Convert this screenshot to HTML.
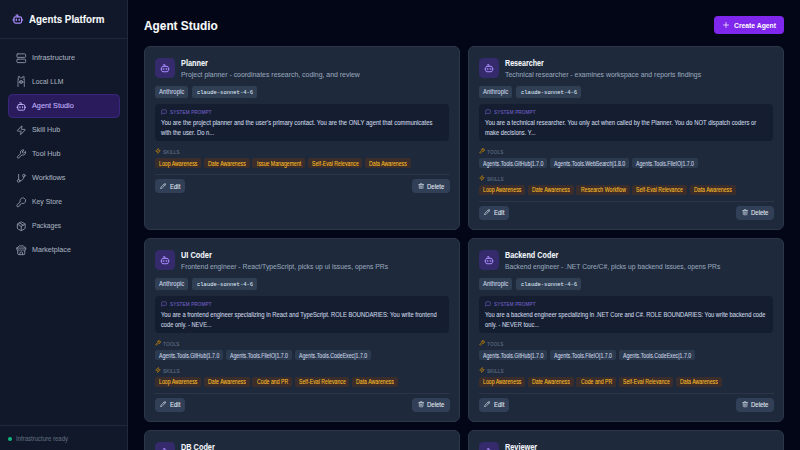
<!DOCTYPE html>
<html><head><meta charset="utf-8">
<style>
*{box-sizing:border-box;margin:0;padding:0}
html,body{width:800px;height:450px;overflow:hidden;background:#020617;font-family:"Liberation Sans",sans-serif}
svg{display:block}
.s{position:relative;display:block;white-space:nowrap}
.s>i{visibility:hidden;font-style:normal}
.s>b{position:absolute;left:0;top:0;font-weight:inherit;transform-origin:0 0;-webkit-text-stroke:0.08px currentColor}
.a{position:absolute;white-space:nowrap;transform-origin:0 0;-webkit-text-stroke:0.08px currentColor}
.sb{position:absolute;left:0;top:0;width:128px;height:450px;background:#101829;border-right:1px solid #1e293b}
.sbh{position:absolute;left:0;top:0;width:127px;height:39px;border-bottom:1px solid #1e293b}
.sbh svg{position:absolute;left:12.2px;top:12.8px}
.nav{position:absolute;left:8px;top:46px;width:112px}
.ni{position:relative;height:24px;border-radius:4px;color:#a3adbd}
.ni svg{position:absolute;left:8px;top:7px}
.ni.act{background:#2a1b5d;border:1px solid #38277c;border-radius:4.5px;color:#c4b5fd}
.ni.act svg{left:7px;top:6px}
.ni.act .a{margin-left:-1px;margin-top:-1px}
.sbf{position:absolute;left:0;top:425px;width:127px;height:25px;border-top:1px solid #1e293b}
.dot{position:absolute;left:8px;top:10.5px;width:4px;height:4px;border-radius:50%;background:#10b981}
.cbtn{position:absolute;left:714px;top:16px;width:70px;height:18px;border-radius:4px;background:#7f27ec;color:#fff;font-weight:700}
.cbtn svg{position:absolute;left:9px;top:6px}
.card{position:absolute;width:316px;height:184px;background:#1e293b;border:0.5px solid #2b3749;border-radius:6px;padding:11px 9.5px 10px 9.5px;display:flex;flex-direction:column}
.card>*{flex:none}
.hd{display:flex;height:21.5px}
.ib{width:20px;height:20px;border-radius:4.5px;background:#352a6b;flex:none;position:relative}
.ib svg{position:absolute;left:5px;top:4.8px}
.tt{margin-left:6px}
.t1{font-weight:700;color:#f1f5f9;line-height:10px;height:10px}
.t2{color:#94a3b8;line-height:10px;margin-top:1.8px;height:10px}
.bd{display:flex;margin-top:6.5px;height:11.75px}
.bg{background:#313f55;border-radius:2.5px;padding:0 4.3px;color:#cbd5e1;line-height:11.75px;margin-right:4px;white-space:nowrap}
.bg.m{font-family:"Liberation Mono",monospace}
.nm>b{-webkit-text-stroke:0.05px currentColor;color:#dbe3ee}
.pr{margin-bottom:1.2px;margin-top:6.5px;margin-right:0.8px;background:#151e31;border-radius:4px;padding:4px 6px 3.1px 6px}
.pl{display:flex;align-items:center;height:7px;color:#7360c8;letter-spacing:0.16px}
.pl svg{margin-right:3px}
.pt{margin-top:2.7px;color:#cbd5e1;line-height:9.8px;white-space:nowrap}
.pt div{height:9.8px}
.sl{display:flex;align-items:center;height:7px;margin-top:6.1px;color:#64748b;letter-spacing:0.2px}
.sl svg{margin-right:2.6px}
.ch{display:flex;flex-wrap:nowrap;margin-top:3.2px;height:10.4px}
.c{border-radius:2px;padding:0 4.1px;line-height:10.4px;margin-right:2.8px;white-space:nowrap}
.c.t{background:#2c3a50;color:#cbd5e1}
.c.s{background:#3a2d2b;color:#fbbf24}
.ft{margin-top:6px;border-top:0.5px solid #2a3648;padding-top:3.4px;display:flex;justify-content:space-between}
.btn{height:14px;border-radius:4px;background:#324057;color:#e2e8f0;line-height:14px;position:relative;white-space:nowrap}
.btn svg{position:absolute;top:3.8px}
.btn.e{width:30.6px}
.btn.e svg{left:5.7px}
.btn.d{width:37.5px}
.btn.d svg{left:6px}
</style></head><body>
<div class="sb">
<div class="sbh"><svg width="11.5" height="11.5" viewBox="0 0 24 24" fill="none" stroke="#a78bfa" stroke-width="2.6" stroke-linecap="round" stroke-linejoin="round"><path d="M12 8V4.2H8.5"/><rect width="16" height="13" x="4" y="8" rx="3.2"/><path d="M2 14.5h2"/><path d="M20 14.5h2"/><path d="M15 12.8v2.8"/><path d="M9 12.8v2.8"/></svg><span class="a" style="font-size:10.000px;transform:scaleX(0.9780);left:28.5px;top:14.2px;line-height:12px;font-weight:700;color:#f8fafc">Agents Platform</span></div>
<div class="nav"><div class="ni"><svg width="10.5" height="10.5" viewBox="0 0 24 24" fill="none" stroke="#8b95a7" stroke-width="2.1" stroke-linecap="round" stroke-linejoin="round"><rect width="20" height="8" x="2" y="2" rx="2" ry="2"/><rect width="20" height="8" x="2" y="14" rx="2" ry="2"/></svg><span class="a" style="font-size:7.300px;transform:scaleX(1.0000);left:24px;top:8.4px;line-height:8px">Infrastructure</span></div><div class="ni"><svg style="left:7px;top:5px" width="12" height="12" viewBox="0 0 12 12" fill="none" stroke="#8b95a7" stroke-width="0.85" stroke-linecap="round" stroke-linejoin="round"><path d="M3.2 4.6L3.3 1.6Q3.6 0.9 4.3 1.3L5.2 3Q6.15 2.6 7.1 3L8 1.3Q8.7 0.9 9 1.6L9.1 4.6"/><path d="M3.2 4.6Q2.6 5.6 3 7L3 11.6"/><path d="M9.1 4.6Q9.7 5.6 9.3 7L9.3 11.6"/><ellipse cx="6.15" cy="7" rx="1.8" ry="1.4" fill="#8b95a7" fill-opacity="0.55"/></svg><span class="a" style="font-size:7.300px;transform:scaleX(0.9320);left:24px;top:8.4px;line-height:8px">Local LLM</span></div><div class="ni act"><svg width="10.5" height="10.5" viewBox="0 0 24 24" fill="none" stroke="#c4b5fd" stroke-width="2.1" stroke-linecap="round" stroke-linejoin="round"><path d="M12 8V4.2H8.5"/><rect width="16" height="13" x="4" y="8" rx="3.2"/><path d="M2 14.5h2"/><path d="M20 14.5h2"/><path d="M15 12.8v2.8"/><path d="M9 12.8v2.8"/></svg><span class="a" style="font-size:7.300px;transform:scaleX(1.0000);left:24px;top:8.4px;line-height:8px">Agent Studio</span></div><div class="ni"><svg width="10.5" height="10.5" viewBox="0 0 24 24" fill="none" stroke="#8b95a7" stroke-width="2.1" stroke-linecap="round" stroke-linejoin="round"><path d="M4 14a1 1 0 0 1-.78-1.630l9.9-10.2a.5.5 0 0 1 .86.46l-1.92 6.02A1 1 0 0 0 13 10h7a1 1 0 0 1 .78 1.63l-9.9 10.2a.5.5 0 0 1-.86-.46l1.92-6.02A1 1 0 0 0 11 14z"/></svg><span class="a" style="font-size:7.300px;transform:scaleX(0.9760);left:24px;top:8.4px;line-height:8px">Skill Hub</span></div><div class="ni"><svg width="10.5" height="10.5" viewBox="0 0 24 24" fill="none" stroke="#8b95a7" stroke-width="2.1" stroke-linecap="round" stroke-linejoin="round"><path d="M14.7 6.3a1 1 0 0 0 0 1.4l1.6 1.6a1 1 0 0 0 1.4 0l3.77-3.77a6 6 0 0 1-7.94 7.94l-6.91 6.91a2.12 2.12 0 0 1-3-3l6.91-6.91a6 6 0 0 1 7.94-7.94l-3.76 3.76z"/></svg><span class="a" style="font-size:7.300px;transform:scaleX(0.9900);left:24px;top:8.4px;line-height:8px">Tool Hub</span></div><div class="ni"><svg width="10.5" height="10.5" viewBox="0 0 24 24" fill="none" stroke="#8b95a7" stroke-width="2.1" stroke-linecap="round" stroke-linejoin="round"><line x1="6" x2="6" y1="3" y2="15"/><circle cx="18" cy="6" r="3"/><circle cx="6" cy="18" r="3"/><path d="M18 9a9 9 0 0 1-9 9"/></svg><span class="a" style="font-size:7.300px;transform:scaleX(1.0000);left:24px;top:8.4px;line-height:8px">Workflows</span></div><div class="ni"><svg width="10.5" height="10.5" viewBox="0 0 24 24" fill="none" stroke="#8b95a7" stroke-width="2.1" stroke-linecap="round" stroke-linejoin="round"><path d="M2.586 17.414A2 2 0 0 0 2 18.828V21a1 1 0 0 0 1 1h3a1 1 0 0 0 1-1v-1a1 1 0 0 1 1-1h1a1 1 0 0 0 1-1v-1a1 1 0 0 1 1-1h.172a2 2 0 0 0 1.414-.586l.814-.814a6.5 6.5 0 1 0-4-4z"/></svg><span class="a" style="font-size:7.300px;transform:scaleX(0.9375);left:24px;top:8.4px;line-height:8px">Key Store</span></div><div class="ni"><svg width="10.5" height="10.5" viewBox="0 0 24 24" fill="none" stroke="#8b95a7" stroke-width="2.1" stroke-linecap="round" stroke-linejoin="round"><path d="M11 21.73a2 2 0 0 0 2 0l7-4A2 2 0 0 0 21 16V8a2 2 0 0 0-1-1.73l-7-4a2 2 0 0 0-2 0l-7 4A2 2 0 0 0 3 8v8a2 2 0 0 0 1 1.73z"/><path d="M12 22V12"/><path d="m3.3 7 7.703 4.734a2 2 0 0 0 1.994 0L20.7 7"/><path d="m7.5 4.27 9 5.15"/></svg><span class="a" style="font-size:7.300px;transform:scaleX(0.9100);left:24px;top:8.4px;line-height:8px">Packages</span></div><div class="ni"><svg width="10.5" height="10.5" viewBox="0 0 24 24" fill="none" stroke="#8b95a7" stroke-width="2.1" stroke-linecap="round" stroke-linejoin="round"><path d="m2 7 4.41-4.41A2 2 0 0 1 7.83 2h8.34a2 2 0 0 1 1.42.59L22 7"/><path d="M4 12v8a2 2 0 0 0 2 2h12a2 2 0 0 0 2-2v-8"/><path d="M15 22v-4a2 2 0 0 0-2-2h-2a2 2 0 0 0-2 2v4"/><path d="M2 7h20"/><path d="M22 7v3a2 2 0 0 1-2 2a2.7 2.7 0 0 1-1.59-.63.7.7 0 0 0-.82 0A2.7 2.7 0 0 1 16 12a2.7 2.7 0 0 1-1.59-.63.7.7 0 0 0-.82 0A2.7 2.7 0 0 1 12 12a2.7 2.7 0 0 1-1.59-.63.7.7 0 0 0-.82 0A2.7 2.7 0 0 1 8 12a2.7 2.7 0 0 1-1.59-.63.7.7 0 0 0-.82 0A2.7 2.7 0 0 1 4 12a2 2 0 0 1-2-2V7"/></svg><span class="a" style="font-size:7.300px;transform:scaleX(0.9780);left:24px;top:8.4px;line-height:8px">Marketplace</span></div></div>
<div class="sbf"><div class="dot"></div><span class="a" style="font-size:6.300px;transform:scaleX(0.9524);left:16px;top:8.5px;line-height:8px;color:#5f6b7e">Infrastructure ready</span></div>
</div>
<span class="a" style="font-size:12.000px;transform:scaleX(0.9870);left:144px;top:18px;line-height:16px;font-weight:700;color:#f8fafc">Agent Studio</span>
<div class="cbtn"><svg width="6" height="6" viewBox="0 0 12 12" fill="none" stroke="#fff" stroke-width="1.4" stroke-linecap="round" stroke-linejoin="round"><path d="M6 1v10M1 6h10"/></svg><span class="a" style="font-size:7.616px;transform:scaleX(0.8929);left:19.9px;top:5.6px;line-height:8px;-webkit-text-stroke:0">Create Agent</span></div>
<div class="card" style="left:144px;top:46px"><div class="hd"><div class="ib"><svg width="10" height="10" viewBox="0 0 24 24" fill="none" stroke="#a78bfa" stroke-width="2.4" stroke-linecap="round" stroke-linejoin="round"><path d="M12 8V4.2H8.5"/><rect width="16" height="13" x="4" y="8" rx="3.2"/><path d="M2 14.5h2"/><path d="M20 14.5h2"/><path d="M15 12.8v2.8"/><path d="M9 12.8v2.8"/></svg></div><div class="tt"><div class="t1"><span class="s " style="font-size:7.5px"><i>Planner</i><b style="font-size:8.400px;transform:scaleX(0.8768)">Planner</b></span></div><div class="t2"><span class="s " style="font-size:7px"><i>Project planner - coordinates research, coding, and review</i><b style="font-size:7.840px;transform:scaleX(0.8835)">Project planner - coordinates research, coding, and review</b></span></div></div></div><div class="bd"><div class="bg"><span class="s " style="font-size:6px"><i>Anthropic</i><b style="top:0.4px;font-size:6.720px;transform:scaleX(0.8929)">Anthropic</b></span></div><div class="bg m"><span class="s nm" style="font-size:5.5px"><i>claude-sonnet-4-6</i><b style="top:0.5px;font-size:6.160px;transform:scaleX(0.8929)">claude-sonnet-4-6</b></span></div></div><div class="pr"><div class="pl"><svg width="6.2" height="6.2" viewBox="0 0 24 24" fill="none" stroke="#7360c8" stroke-width="2.3" stroke-linecap="round" stroke-linejoin="round"><path d="M21 15a2 2 0 0 1-2 2H7l-4 4V5a2 2 0 0 1 2-2h14a2 2 0 0 1 2 2z"/></svg><span class="s " style="font-size:4.6px"><i>SYSTEM PROMPT</i><b style="font-size:5.152px;transform:scaleX(0.8929)">SYSTEM PROMPT</b></span></div><div class="pt"><div><span class="s " style="font-size:6px"><i>You are the project planner and the user&#39;s primary contact. You are the ONLY agent that communicates</i><b style="font-size:6.720px;transform:scaleX(0.8866)">You are the project planner and the user&#39;s primary contact. You are the ONLY agent that communicates</b></span></div><div><span class="s " style="font-size:6px"><i>with the user. Do n...</i><b style="font-size:6.720px;transform:scaleX(0.8670)">with the user. Do n...</b></span></div></div></div><div class="sl"><svg width="6" height="6" viewBox="0 0 24 24" fill="none" stroke="#ca8a04" stroke-width="2.6" stroke-linecap="round" stroke-linejoin="round"><path d="M4 14a1 1 0 0 1-.78-1.630l9.9-10.2a.5.5 0 0 1 .86.46l-1.92 6.02A1 1 0 0 0 13 10h7a1 1 0 0 1 .78 1.63l-9.9 10.2a.5.5 0 0 1-.86-.46l1.92-6.02A1 1 0 0 0 11 14z"/></svg><span class="s " style="font-size:4.6px"><i>SKILLS</i><b style="font-size:5.152px;transform:scaleX(0.8929)">SKILLS</b></span></div><div class="ch"><div class="c s"><span class="s " style="font-size:5.2px"><i>Loop Awareness</i><b style="top:0.5px;font-size:6.500px;transform:scaleX(0.8000)">Loop Awareness</b></span></div><div class="c s"><span class="s " style="font-size:5.2px"><i>Date Awareness</i><b style="top:0.5px;font-size:6.500px;transform:scaleX(0.8000)">Date Awareness</b></span></div><div class="c s"><span class="s " style="font-size:5.2px"><i>Issue Management</i><b style="top:0.5px;font-size:6.500px;transform:scaleX(0.8000)">Issue Management</b></span></div><div class="c s"><span class="s " style="font-size:5.2px"><i>Self-Eval Relevance</i><b style="top:0.5px;font-size:6.500px;transform:scaleX(0.8000)">Self-Eval Relevance</b></span></div><div class="c s"><span class="s " style="font-size:5.2px"><i>Data Awareness</i><b style="top:0.5px;font-size:6.500px;transform:scaleX(0.8000)">Data Awareness</b></span></div></div><div class="ft"><div class="btn e"><svg width="6.2" height="6.2" viewBox="0 0 24 24" fill="none" stroke="#cbd5e1" stroke-width="2.8" stroke-linecap="round" stroke-linejoin="round"><path d="M21.174 6.812a1 1 0 0 0-3.986-3.987L3.842 16.174a2 2 0 0 0-.5.83l-1.321 4.352a.5.5 0 0 0 .623.622l4.353-1.32a2 2 0 0 0 .83-.497z"/><path d="m15 5 4 4"/></svg><span class="a" style="font-size:6.720px;transform:scaleX(0.8929);left:15px;top:3.8px;line-height:8px">Edit</span></div><div class="btn d"><svg width="6.3" height="6.3" viewBox="0 0 24 24" fill="none" stroke="#cbd5e1" stroke-width="2.6" stroke-linecap="round" stroke-linejoin="round"><path d="M3 6h18"/><path d="M19 6v14c0 1-1 2-2 2H7c-1 0-2-1-2-2V6"/><path d="M8 6V4c0-1 1-2 2-2h4c1 0 2 1 2 2v2"/><line x1="10" x2="10" y1="11" y2="17"/><line x1="14" x2="14" y1="11" y2="17"/></svg><span class="a" style="font-size:6.720px;transform:scaleX(0.8929);left:15px;top:3.8px;line-height:8px">Delete</span></div></div></div>
<div class="card" style="left:468px;top:46px"><div class="hd"><div class="ib"><svg width="10" height="10" viewBox="0 0 24 24" fill="none" stroke="#a78bfa" stroke-width="2.4" stroke-linecap="round" stroke-linejoin="round"><path d="M12 8V4.2H8.5"/><rect width="16" height="13" x="4" y="8" rx="3.2"/><path d="M2 14.5h2"/><path d="M20 14.5h2"/><path d="M15 12.8v2.8"/><path d="M9 12.8v2.8"/></svg></div><div class="tt"><div class="t1"><span class="s " style="font-size:7.5px"><i>Researcher</i><b style="font-size:8.400px;transform:scaleX(0.8518)">Researcher</b></span></div><div class="t2"><span class="s " style="font-size:7px"><i>Technical researcher - examines workspace and reports findings</i><b style="font-size:7.840px;transform:scaleX(0.8786)">Technical researcher - examines workspace and reports findings</b></span></div></div></div><div class="bd"><div class="bg"><span class="s " style="font-size:6px"><i>Anthropic</i><b style="top:0.4px;font-size:6.720px;transform:scaleX(0.8929)">Anthropic</b></span></div><div class="bg m"><span class="s nm" style="font-size:5.5px"><i>claude-sonnet-4-6</i><b style="top:0.5px;font-size:6.160px;transform:scaleX(0.8929)">claude-sonnet-4-6</b></span></div></div><div class="pr"><div class="pl"><svg width="6.2" height="6.2" viewBox="0 0 24 24" fill="none" stroke="#7360c8" stroke-width="2.3" stroke-linecap="round" stroke-linejoin="round"><path d="M21 15a2 2 0 0 1-2 2H7l-4 4V5a2 2 0 0 1 2-2h14a2 2 0 0 1 2 2z"/></svg><span class="s " style="font-size:4.6px"><i>SYSTEM PROMPT</i><b style="font-size:5.152px;transform:scaleX(0.8929)">SYSTEM PROMPT</b></span></div><div class="pt"><div><span class="s " style="font-size:6px"><i>You are a technical researcher. You only act when called by the Planner. You do NOT dispatch coders or</i><b style="font-size:6.720px;transform:scaleX(0.8759)">You are a technical researcher. You only act when called by the Planner. You do NOT dispatch coders or</b></span></div><div><span class="s " style="font-size:6px"><i>make decisions. Y...</i><b style="font-size:6.720px;transform:scaleX(0.8571)">make decisions. Y...</b></span></div></div></div><div class="sl"><svg width="6" height="6" viewBox="0 0 24 24" fill="none" stroke="#ca8a04" stroke-width="2.6" stroke-linecap="round" stroke-linejoin="round"><path d="M14.7 6.3a1 1 0 0 0 0 1.4l1.6 1.6a1 1 0 0 0 1.4 0l3.77-3.77a6 6 0 0 1-7.94 7.94l-6.91 6.91a2.12 2.12 0 0 1-3-3l6.91-6.91a6 6 0 0 1 7.94-7.94l-3.76 3.76z"/></svg><span class="s " style="font-size:4.6px"><i>TOOLS</i><b style="font-size:5.152px;transform:scaleX(0.8929)">TOOLS</b></span></div><div class="ch"><div class="c t"><span class="s " style="font-size:5.2px"><i>Agents.Tools.GitHub|1.7.0</i><b style="top:0.5px;font-size:6.500px;transform:scaleX(0.8000)">Agents.Tools.GitHub|1.7.0</b></span></div><div class="c t"><span class="s " style="font-size:5.2px"><i>Agents.Tools.WebSearch|1.8.0</i><b style="top:0.5px;font-size:6.500px;transform:scaleX(0.8000)">Agents.Tools.WebSearch|1.8.0</b></span></div><div class="c t"><span class="s " style="font-size:5.2px"><i>Agents.Tools.FileIO|1.7.0</i><b style="top:0.5px;font-size:6.500px;transform:scaleX(0.8000)">Agents.Tools.FileIO|1.7.0</b></span></div></div><div class="sl"><svg width="6" height="6" viewBox="0 0 24 24" fill="none" stroke="#ca8a04" stroke-width="2.6" stroke-linecap="round" stroke-linejoin="round"><path d="M4 14a1 1 0 0 1-.78-1.630l9.9-10.2a.5.5 0 0 1 .86.46l-1.92 6.02A1 1 0 0 0 13 10h7a1 1 0 0 1 .78 1.63l-9.9 10.2a.5.5 0 0 1-.86-.46l1.92-6.02A1 1 0 0 0 11 14z"/></svg><span class="s " style="font-size:4.6px"><i>SKILLS</i><b style="font-size:5.152px;transform:scaleX(0.8929)">SKILLS</b></span></div><div class="ch"><div class="c s"><span class="s " style="font-size:5.2px"><i>Loop Awareness</i><b style="top:0.5px;font-size:6.500px;transform:scaleX(0.8000)">Loop Awareness</b></span></div><div class="c s"><span class="s " style="font-size:5.2px"><i>Date Awareness</i><b style="top:0.5px;font-size:6.500px;transform:scaleX(0.8000)">Date Awareness</b></span></div><div class="c s"><span class="s " style="font-size:5.2px"><i>Research Workflow</i><b style="top:0.5px;font-size:6.500px;transform:scaleX(0.8000)">Research Workflow</b></span></div><div class="c s"><span class="s " style="font-size:5.2px"><i>Self-Eval Relevance</i><b style="top:0.5px;font-size:6.500px;transform:scaleX(0.8000)">Self-Eval Relevance</b></span></div><div class="c s"><span class="s " style="font-size:5.2px"><i>Data Awareness</i><b style="top:0.5px;font-size:6.500px;transform:scaleX(0.8000)">Data Awareness</b></span></div></div><div class="ft"><div class="btn e"><svg width="6.2" height="6.2" viewBox="0 0 24 24" fill="none" stroke="#cbd5e1" stroke-width="2.8" stroke-linecap="round" stroke-linejoin="round"><path d="M21.174 6.812a1 1 0 0 0-3.986-3.987L3.842 16.174a2 2 0 0 0-.5.83l-1.321 4.352a.5.5 0 0 0 .623.622l4.353-1.32a2 2 0 0 0 .83-.497z"/><path d="m15 5 4 4"/></svg><span class="a" style="font-size:6.720px;transform:scaleX(0.8929);left:15px;top:3.8px;line-height:8px">Edit</span></div><div class="btn d"><svg width="6.3" height="6.3" viewBox="0 0 24 24" fill="none" stroke="#cbd5e1" stroke-width="2.6" stroke-linecap="round" stroke-linejoin="round"><path d="M3 6h18"/><path d="M19 6v14c0 1-1 2-2 2H7c-1 0-2-1-2-2V6"/><path d="M8 6V4c0-1 1-2 2-2h4c1 0 2 1 2 2v2"/><line x1="10" x2="10" y1="11" y2="17"/><line x1="14" x2="14" y1="11" y2="17"/></svg><span class="a" style="font-size:6.720px;transform:scaleX(0.8929);left:15px;top:3.8px;line-height:8px">Delete</span></div></div></div>
<div class="card" style="left:144px;top:238px"><div class="hd"><div class="ib"><svg width="10" height="10" viewBox="0 0 24 24" fill="none" stroke="#a78bfa" stroke-width="2.4" stroke-linecap="round" stroke-linejoin="round"><path d="M12 8V4.2H8.5"/><rect width="16" height="13" x="4" y="8" rx="3.2"/><path d="M2 14.5h2"/><path d="M20 14.5h2"/><path d="M15 12.8v2.8"/><path d="M9 12.8v2.8"/></svg></div><div class="tt"><div class="t1"><span class="s " style="font-size:7.5px"><i>UI Coder</i><b style="font-size:8.400px;transform:scaleX(0.8839)">UI Coder</b></span></div><div class="t2"><span class="s " style="font-size:7px"><i>Frontend engineer - React/TypeScript, picks up ui issues, opens PRs</i><b style="font-size:7.840px;transform:scaleX(0.8670)">Frontend engineer - React/TypeScript, picks up ui issues, opens PRs</b></span></div></div></div><div class="bd"><div class="bg"><span class="s " style="font-size:6px"><i>Anthropic</i><b style="top:0.4px;font-size:6.720px;transform:scaleX(0.8929)">Anthropic</b></span></div><div class="bg m"><span class="s nm" style="font-size:5.5px"><i>claude-sonnet-4-6</i><b style="top:0.5px;font-size:6.160px;transform:scaleX(0.8929)">claude-sonnet-4-6</b></span></div></div><div class="pr"><div class="pl"><svg width="6.2" height="6.2" viewBox="0 0 24 24" fill="none" stroke="#7360c8" stroke-width="2.3" stroke-linecap="round" stroke-linejoin="round"><path d="M21 15a2 2 0 0 1-2 2H7l-4 4V5a2 2 0 0 1 2-2h14a2 2 0 0 1 2 2z"/></svg><span class="s " style="font-size:4.6px"><i>SYSTEM PROMPT</i><b style="font-size:5.152px;transform:scaleX(0.8929)">SYSTEM PROMPT</b></span></div><div class="pt"><div><span class="s " style="font-size:6px"><i>You are a frontend engineer specializing in React and TypeScript. ROLE BOUNDARIES: You write frontend</i><b style="font-size:6.720px;transform:scaleX(0.8652)">You are a frontend engineer specializing in React and TypeScript. ROLE BOUNDARIES: You write frontend</b></span></div><div><span class="s " style="font-size:6px"><i>code only. - NEVE...</i><b style="font-size:6.720px;transform:scaleX(0.8446)">code only. - NEVE...</b></span></div></div></div><div class="sl"><svg width="6" height="6" viewBox="0 0 24 24" fill="none" stroke="#ca8a04" stroke-width="2.6" stroke-linecap="round" stroke-linejoin="round"><path d="M14.7 6.3a1 1 0 0 0 0 1.4l1.6 1.6a1 1 0 0 0 1.4 0l3.77-3.77a6 6 0 0 1-7.94 7.94l-6.91 6.91a2.12 2.12 0 0 1-3-3l6.91-6.91a6 6 0 0 1 7.94-7.94l-3.76 3.76z"/></svg><span class="s " style="font-size:4.6px"><i>TOOLS</i><b style="font-size:5.152px;transform:scaleX(0.8929)">TOOLS</b></span></div><div class="ch"><div class="c t"><span class="s " style="font-size:5.2px"><i>Agents.Tools.GitHub|1.7.0</i><b style="top:0.5px;font-size:6.500px;transform:scaleX(0.8000)">Agents.Tools.GitHub|1.7.0</b></span></div><div class="c t"><span class="s " style="font-size:5.2px"><i>Agents.Tools.FileIO|1.7.0</i><b style="top:0.5px;font-size:6.500px;transform:scaleX(0.8000)">Agents.Tools.FileIO|1.7.0</b></span></div><div class="c t"><span class="s " style="font-size:5.2px"><i>Agents.Tools.CodeExec|1.7.0</i><b style="top:0.5px;font-size:6.500px;transform:scaleX(0.8000)">Agents.Tools.CodeExec|1.7.0</b></span></div></div><div class="sl"><svg width="6" height="6" viewBox="0 0 24 24" fill="none" stroke="#ca8a04" stroke-width="2.6" stroke-linecap="round" stroke-linejoin="round"><path d="M4 14a1 1 0 0 1-.78-1.630l9.9-10.2a.5.5 0 0 1 .86.46l-1.92 6.02A1 1 0 0 0 13 10h7a1 1 0 0 1 .78 1.63l-9.9 10.2a.5.5 0 0 1-.86-.46l1.92-6.02A1 1 0 0 0 11 14z"/></svg><span class="s " style="font-size:4.6px"><i>SKILLS</i><b style="font-size:5.152px;transform:scaleX(0.8929)">SKILLS</b></span></div><div class="ch"><div class="c s"><span class="s " style="font-size:5.2px"><i>Loop Awareness</i><b style="top:0.5px;font-size:6.500px;transform:scaleX(0.8000)">Loop Awareness</b></span></div><div class="c s"><span class="s " style="font-size:5.2px"><i>Date Awareness</i><b style="top:0.5px;font-size:6.500px;transform:scaleX(0.8000)">Date Awareness</b></span></div><div class="c s"><span class="s " style="font-size:5.2px"><i>Code and PR</i><b style="top:0.5px;font-size:6.500px;transform:scaleX(0.8000)">Code and PR</b></span></div><div class="c s"><span class="s " style="font-size:5.2px"><i>Self-Eval Relevance</i><b style="top:0.5px;font-size:6.500px;transform:scaleX(0.8000)">Self-Eval Relevance</b></span></div><div class="c s"><span class="s " style="font-size:5.2px"><i>Data Awareness</i><b style="top:0.5px;font-size:6.500px;transform:scaleX(0.8000)">Data Awareness</b></span></div></div><div class="ft"><div class="btn e"><svg width="6.2" height="6.2" viewBox="0 0 24 24" fill="none" stroke="#cbd5e1" stroke-width="2.8" stroke-linecap="round" stroke-linejoin="round"><path d="M21.174 6.812a1 1 0 0 0-3.986-3.987L3.842 16.174a2 2 0 0 0-.5.83l-1.321 4.352a.5.5 0 0 0 .623.622l4.353-1.32a2 2 0 0 0 .83-.497z"/><path d="m15 5 4 4"/></svg><span class="a" style="font-size:6.720px;transform:scaleX(0.8929);left:15px;top:3.8px;line-height:8px">Edit</span></div><div class="btn d"><svg width="6.3" height="6.3" viewBox="0 0 24 24" fill="none" stroke="#cbd5e1" stroke-width="2.6" stroke-linecap="round" stroke-linejoin="round"><path d="M3 6h18"/><path d="M19 6v14c0 1-1 2-2 2H7c-1 0-2-1-2-2V6"/><path d="M8 6V4c0-1 1-2 2-2h4c1 0 2 1 2 2v2"/><line x1="10" x2="10" y1="11" y2="17"/><line x1="14" x2="14" y1="11" y2="17"/></svg><span class="a" style="font-size:6.720px;transform:scaleX(0.8929);left:15px;top:3.8px;line-height:8px">Delete</span></div></div></div>
<div class="card" style="left:468px;top:238px"><div class="hd"><div class="ib"><svg width="10" height="10" viewBox="0 0 24 24" fill="none" stroke="#a78bfa" stroke-width="2.4" stroke-linecap="round" stroke-linejoin="round"><path d="M12 8V4.2H8.5"/><rect width="16" height="13" x="4" y="8" rx="3.2"/><path d="M2 14.5h2"/><path d="M20 14.5h2"/><path d="M15 12.8v2.8"/><path d="M9 12.8v2.8"/></svg></div><div class="tt"><div class="t1"><span class="s " style="font-size:7.5px"><i>Backend Coder</i><b style="font-size:8.400px;transform:scaleX(0.8670)">Backend Coder</b></span></div><div class="t2"><span class="s " style="font-size:7px"><i>Backend engineer - .NET Core/C#, picks up backend issues, opens PRs</i><b style="font-size:7.840px;transform:scaleX(0.8580)">Backend engineer - .NET Core/C#, picks up backend issues, opens PRs</b></span></div></div></div><div class="bd"><div class="bg"><span class="s " style="font-size:6px"><i>Anthropic</i><b style="top:0.4px;font-size:6.720px;transform:scaleX(0.8929)">Anthropic</b></span></div><div class="bg m"><span class="s nm" style="font-size:5.5px"><i>claude-sonnet-4-6</i><b style="top:0.5px;font-size:6.160px;transform:scaleX(0.8929)">claude-sonnet-4-6</b></span></div></div><div class="pr"><div class="pl"><svg width="6.2" height="6.2" viewBox="0 0 24 24" fill="none" stroke="#7360c8" stroke-width="2.3" stroke-linecap="round" stroke-linejoin="round"><path d="M21 15a2 2 0 0 1-2 2H7l-4 4V5a2 2 0 0 1 2-2h14a2 2 0 0 1 2 2z"/></svg><span class="s " style="font-size:4.6px"><i>SYSTEM PROMPT</i><b style="font-size:5.152px;transform:scaleX(0.8929)">SYSTEM PROMPT</b></span></div><div class="pt"><div><span class="s " style="font-size:6px"><i>You are a backend engineer specializing in .NET Core and C#. ROLE BOUNDARIES: You write backend code</i><b style="font-size:6.720px;transform:scaleX(0.8562)">You are a backend engineer specializing in .NET Core and C#. ROLE BOUNDARIES: You write backend code</b></span></div><div><span class="s " style="font-size:6px"><i>only. - NEVER touc...</i><b style="font-size:6.720px;transform:scaleX(0.8607)">only. - NEVER touc...</b></span></div></div></div><div class="sl"><svg width="6" height="6" viewBox="0 0 24 24" fill="none" stroke="#ca8a04" stroke-width="2.6" stroke-linecap="round" stroke-linejoin="round"><path d="M14.7 6.3a1 1 0 0 0 0 1.4l1.6 1.6a1 1 0 0 0 1.4 0l3.77-3.77a6 6 0 0 1-7.94 7.94l-6.91 6.91a2.12 2.12 0 0 1-3-3l6.91-6.91a6 6 0 0 1 7.94-7.94l-3.76 3.76z"/></svg><span class="s " style="font-size:4.6px"><i>TOOLS</i><b style="font-size:5.152px;transform:scaleX(0.8929)">TOOLS</b></span></div><div class="ch"><div class="c t"><span class="s " style="font-size:5.2px"><i>Agents.Tools.GitHub|1.7.0</i><b style="top:0.5px;font-size:6.500px;transform:scaleX(0.8000)">Agents.Tools.GitHub|1.7.0</b></span></div><div class="c t"><span class="s " style="font-size:5.2px"><i>Agents.Tools.FileIO|1.7.0</i><b style="top:0.5px;font-size:6.500px;transform:scaleX(0.8000)">Agents.Tools.FileIO|1.7.0</b></span></div><div class="c t"><span class="s " style="font-size:5.2px"><i>Agents.Tools.CodeExec|1.7.0</i><b style="top:0.5px;font-size:6.500px;transform:scaleX(0.8000)">Agents.Tools.CodeExec|1.7.0</b></span></div></div><div class="sl"><svg width="6" height="6" viewBox="0 0 24 24" fill="none" stroke="#ca8a04" stroke-width="2.6" stroke-linecap="round" stroke-linejoin="round"><path d="M4 14a1 1 0 0 1-.78-1.630l9.9-10.2a.5.5 0 0 1 .86.46l-1.92 6.02A1 1 0 0 0 13 10h7a1 1 0 0 1 .78 1.63l-9.9 10.2a.5.5 0 0 1-.86-.46l1.92-6.02A1 1 0 0 0 11 14z"/></svg><span class="s " style="font-size:4.6px"><i>SKILLS</i><b style="font-size:5.152px;transform:scaleX(0.8929)">SKILLS</b></span></div><div class="ch"><div class="c s"><span class="s " style="font-size:5.2px"><i>Loop Awareness</i><b style="top:0.5px;font-size:6.500px;transform:scaleX(0.8000)">Loop Awareness</b></span></div><div class="c s"><span class="s " style="font-size:5.2px"><i>Date Awareness</i><b style="top:0.5px;font-size:6.500px;transform:scaleX(0.8000)">Date Awareness</b></span></div><div class="c s"><span class="s " style="font-size:5.2px"><i>Code and PR</i><b style="top:0.5px;font-size:6.500px;transform:scaleX(0.8000)">Code and PR</b></span></div><div class="c s"><span class="s " style="font-size:5.2px"><i>Self-Eval Relevance</i><b style="top:0.5px;font-size:6.500px;transform:scaleX(0.8000)">Self-Eval Relevance</b></span></div><div class="c s"><span class="s " style="font-size:5.2px"><i>Data Awareness</i><b style="top:0.5px;font-size:6.500px;transform:scaleX(0.8000)">Data Awareness</b></span></div></div><div class="ft"><div class="btn e"><svg width="6.2" height="6.2" viewBox="0 0 24 24" fill="none" stroke="#cbd5e1" stroke-width="2.8" stroke-linecap="round" stroke-linejoin="round"><path d="M21.174 6.812a1 1 0 0 0-3.986-3.987L3.842 16.174a2 2 0 0 0-.5.83l-1.321 4.352a.5.5 0 0 0 .623.622l4.353-1.32a2 2 0 0 0 .83-.497z"/><path d="m15 5 4 4"/></svg><span class="a" style="font-size:6.720px;transform:scaleX(0.8929);left:15px;top:3.8px;line-height:8px">Edit</span></div><div class="btn d"><svg width="6.3" height="6.3" viewBox="0 0 24 24" fill="none" stroke="#cbd5e1" stroke-width="2.6" stroke-linecap="round" stroke-linejoin="round"><path d="M3 6h18"/><path d="M19 6v14c0 1-1 2-2 2H7c-1 0-2-1-2-2V6"/><path d="M8 6V4c0-1 1-2 2-2h4c1 0 2 1 2 2v2"/><line x1="10" x2="10" y1="11" y2="17"/><line x1="14" x2="14" y1="11" y2="17"/></svg><span class="a" style="font-size:6.720px;transform:scaleX(0.8929);left:15px;top:3.8px;line-height:8px">Delete</span></div></div></div>
<div class="card" style="left:144px;top:430px"><div class="hd"><div class="ib"><svg width="10" height="10" viewBox="0 0 24 24" fill="none" stroke="#a78bfa" stroke-width="2.4" stroke-linecap="round" stroke-linejoin="round"><path d="M12 8V4.2H8.5"/><rect width="16" height="13" x="4" y="8" rx="3.2"/><path d="M2 14.5h2"/><path d="M20 14.5h2"/><path d="M15 12.8v2.8"/><path d="M9 12.8v2.8"/></svg></div><div class="tt"><div class="t1"><span class="s " style="font-size:7.5px"><i>DB Coder</i><b style="font-size:8.400px;transform:scaleX(0.8750)">DB Coder</b></span></div><div class="t2"><span class="s " style="font-size:7px"><i>Database engineer - schema, migrations, queries</i><b style="font-size:7.840px;transform:scaleX(0.8750)">Database engineer - schema, migrations, queries</b></span></div></div></div><div class="bd"><div class="bg"><span class="s " style="font-size:6px"><i>Anthropic</i><b style="top:0.4px;font-size:6.720px;transform:scaleX(0.8929)">Anthropic</b></span></div><div class="bg m"><span class="s nm" style="font-size:5.5px"><i>claude-sonnet-4-6</i><b style="top:0.5px;font-size:6.160px;transform:scaleX(0.8929)">claude-sonnet-4-6</b></span></div></div><div class="pr"><div class="pl"><svg width="6.2" height="6.2" viewBox="0 0 24 24" fill="none" stroke="#7360c8" stroke-width="2.3" stroke-linecap="round" stroke-linejoin="round"><path d="M21 15a2 2 0 0 1-2 2H7l-4 4V5a2 2 0 0 1 2-2h14a2 2 0 0 1 2 2z"/></svg><span class="s " style="font-size:4.6px"><i>SYSTEM PROMPT</i><b style="font-size:5.152px;transform:scaleX(0.8929)">SYSTEM PROMPT</b></span></div><div class="pt"><div><span class="s " style="font-size:6px"><i>You are a database engineer.</i><b style="font-size:6.720px;transform:scaleX(0.8661)">You are a database engineer.</b></span></div><div><span class="s " style="font-size:6px"><i>...</i><b style="font-size:6.720px;transform:scaleX(0.8571)">...</b></span></div></div></div><div class="sl"><svg width="6" height="6" viewBox="0 0 24 24" fill="none" stroke="#ca8a04" stroke-width="2.6" stroke-linecap="round" stroke-linejoin="round"><path d="M4 14a1 1 0 0 1-.78-1.630l9.9-10.2a.5.5 0 0 1 .86.46l-1.92 6.02A1 1 0 0 0 13 10h7a1 1 0 0 1 .78 1.63l-9.9 10.2a.5.5 0 0 1-.86-.46l1.92-6.02A1 1 0 0 0 11 14z"/></svg><span class="s " style="font-size:4.6px"><i>SKILLS</i><b style="font-size:5.152px;transform:scaleX(0.8929)">SKILLS</b></span></div><div class="ch"><div class="c s"><span class="s " style="font-size:5.2px"><i>Loop Awareness</i><b style="top:0.5px;font-size:6.500px;transform:scaleX(0.8000)">Loop Awareness</b></span></div></div><div class="ft"><div class="btn e"><svg width="6.2" height="6.2" viewBox="0 0 24 24" fill="none" stroke="#cbd5e1" stroke-width="2.8" stroke-linecap="round" stroke-linejoin="round"><path d="M21.174 6.812a1 1 0 0 0-3.986-3.987L3.842 16.174a2 2 0 0 0-.5.83l-1.321 4.352a.5.5 0 0 0 .623.622l4.353-1.32a2 2 0 0 0 .83-.497z"/><path d="m15 5 4 4"/></svg><span class="a" style="font-size:6.720px;transform:scaleX(0.8929);left:15px;top:3.8px;line-height:8px">Edit</span></div><div class="btn d"><svg width="6.3" height="6.3" viewBox="0 0 24 24" fill="none" stroke="#cbd5e1" stroke-width="2.6" stroke-linecap="round" stroke-linejoin="round"><path d="M3 6h18"/><path d="M19 6v14c0 1-1 2-2 2H7c-1 0-2-1-2-2V6"/><path d="M8 6V4c0-1 1-2 2-2h4c1 0 2 1 2 2v2"/><line x1="10" x2="10" y1="11" y2="17"/><line x1="14" x2="14" y1="11" y2="17"/></svg><span class="a" style="font-size:6.720px;transform:scaleX(0.8929);left:15px;top:3.8px;line-height:8px">Delete</span></div></div></div>
<div class="card" style="left:468px;top:430px"><div class="hd"><div class="ib"><svg width="10" height="10" viewBox="0 0 24 24" fill="none" stroke="#a78bfa" stroke-width="2.4" stroke-linecap="round" stroke-linejoin="round"><path d="M12 8V4.2H8.5"/><rect width="16" height="13" x="4" y="8" rx="3.2"/><path d="M2 14.5h2"/><path d="M20 14.5h2"/><path d="M15 12.8v2.8"/><path d="M9 12.8v2.8"/></svg></div><div class="tt"><div class="t1"><span class="s " style="font-size:7.5px"><i>Reviewer</i><b style="font-size:8.400px;transform:scaleX(0.8750)">Reviewer</b></span></div><div class="t2"><span class="s " style="font-size:7px"><i>Code reviewer - reviews PRs</i><b style="font-size:7.840px;transform:scaleX(0.8750)">Code reviewer - reviews PRs</b></span></div></div></div><div class="bd"><div class="bg"><span class="s " style="font-size:6px"><i>Anthropic</i><b style="top:0.4px;font-size:6.720px;transform:scaleX(0.8929)">Anthropic</b></span></div><div class="bg m"><span class="s nm" style="font-size:5.5px"><i>claude-sonnet-4-6</i><b style="top:0.5px;font-size:6.160px;transform:scaleX(0.8929)">claude-sonnet-4-6</b></span></div></div><div class="pr"><div class="pl"><svg width="6.2" height="6.2" viewBox="0 0 24 24" fill="none" stroke="#7360c8" stroke-width="2.3" stroke-linecap="round" stroke-linejoin="round"><path d="M21 15a2 2 0 0 1-2 2H7l-4 4V5a2 2 0 0 1 2-2h14a2 2 0 0 1 2 2z"/></svg><span class="s " style="font-size:4.6px"><i>SYSTEM PROMPT</i><b style="font-size:5.152px;transform:scaleX(0.8929)">SYSTEM PROMPT</b></span></div><div class="pt"><div><span class="s " style="font-size:6px"><i>You are a code reviewer.</i><b style="font-size:6.720px;transform:scaleX(0.8661)">You are a code reviewer.</b></span></div><div><span class="s " style="font-size:6px"><i>...</i><b style="font-size:6.720px;transform:scaleX(0.8571)">...</b></span></div></div></div><div class="sl"><svg width="6" height="6" viewBox="0 0 24 24" fill="none" stroke="#ca8a04" stroke-width="2.6" stroke-linecap="round" stroke-linejoin="round"><path d="M4 14a1 1 0 0 1-.78-1.630l9.9-10.2a.5.5 0 0 1 .86.46l-1.92 6.02A1 1 0 0 0 13 10h7a1 1 0 0 1 .78 1.63l-9.9 10.2a.5.5 0 0 1-.86-.46l1.92-6.02A1 1 0 0 0 11 14z"/></svg><span class="s " style="font-size:4.6px"><i>SKILLS</i><b style="font-size:5.152px;transform:scaleX(0.8929)">SKILLS</b></span></div><div class="ch"><div class="c s"><span class="s " style="font-size:5.2px"><i>Loop Awareness</i><b style="top:0.5px;font-size:6.500px;transform:scaleX(0.8000)">Loop Awareness</b></span></div></div><div class="ft"><div class="btn e"><svg width="6.2" height="6.2" viewBox="0 0 24 24" fill="none" stroke="#cbd5e1" stroke-width="2.8" stroke-linecap="round" stroke-linejoin="round"><path d="M21.174 6.812a1 1 0 0 0-3.986-3.987L3.842 16.174a2 2 0 0 0-.5.83l-1.321 4.352a.5.5 0 0 0 .623.622l4.353-1.32a2 2 0 0 0 .83-.497z"/><path d="m15 5 4 4"/></svg><span class="a" style="font-size:6.720px;transform:scaleX(0.8929);left:15px;top:3.8px;line-height:8px">Edit</span></div><div class="btn d"><svg width="6.3" height="6.3" viewBox="0 0 24 24" fill="none" stroke="#cbd5e1" stroke-width="2.6" stroke-linecap="round" stroke-linejoin="round"><path d="M3 6h18"/><path d="M19 6v14c0 1-1 2-2 2H7c-1 0-2-1-2-2V6"/><path d="M8 6V4c0-1 1-2 2-2h4c1 0 2 1 2 2v2"/><line x1="10" x2="10" y1="11" y2="17"/><line x1="14" x2="14" y1="11" y2="17"/></svg><span class="a" style="font-size:6.720px;transform:scaleX(0.8929);left:15px;top:3.8px;line-height:8px">Delete</span></div></div></div>
</body></html>
